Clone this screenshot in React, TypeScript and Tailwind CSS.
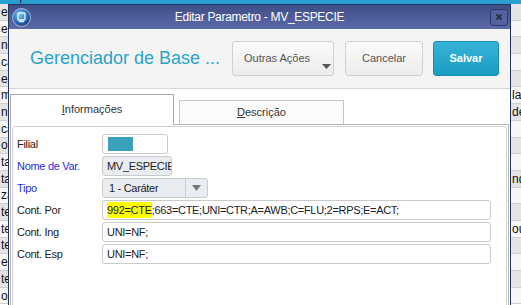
const leftCells = ['em', 'e a', 'ne', 'ca', 'em', 'm', 'na', 'ca', 'o e', 'ta', 'ta', 'za', 'te', 'te', 'te', 'e a', 'te', 'o'];
const rightCells: Record<number, string> = { 5: 'la.', 6: 'de', 10: 'nd', 13: 'ou' };

// ---------------------------------------------------------------------------
// Background grid (behind the dialog)
// ---------------------------------------------------------------------------

function BackgroundGrid() {
  return (
    <div className="flex flex-col">
      <div className="h-[4px] overflow-hidden bg-[#2a9fd2]">
        <div className="-mt-[12px] flex h-[16px] items-center text-[12px] leading-[16px] text-[#0d1b33]">
          <span className="w-[272px] shrink-0 whitespace-nowrap">m tipos de documentos fiscais utilizados na</span>
          <span className="whitespace-nowrap">emissão de notas fiscais</span>
        </div>
      </div>
      {leftCells.map((cell, i) => (
        <div
          key={i}
          className={`flex h-[16.7px] items-center border-b border-[#cfcfcf] text-[12px] text-[#111] ${
            i % 2 === 0 ? 'bg-[#e4e4e4]' : 'bg-[#f6f6f6]'
          }`}
        >
          <span className="w-[512px] shrink-0 whitespace-nowrap pl-[1px]">{cell}</span>
          <span className="whitespace-nowrap">{rightCells[i] ?? ''}</span>
        </div>
      ))}
    </div>
  );
}

// ---------------------------------------------------------------------------
// Form pieces
// ---------------------------------------------------------------------------

function FieldLabel({ text, blue = false }: { text: string; blue?: boolean }) {
  return (
    <span className={`w-[89px] shrink-0 pl-[4px] ${blue ? 'text-[#2a2ae6]' : 'text-[#222]'}`}>{text}</span>
  );
}

function TextField({ value, highlight }: { value: string; highlight?: string }) {
  return (
    <div className="flex h-[20px] w-[389px] items-center overflow-hidden whitespace-nowrap rounded-[3px] border border-[#cacaca] bg-white pl-[4px] text-[#222]">
      {highlight && <span className="bg-[#ffff00] leading-[16px]">{highlight}</span>}
      {value}
    </div>
  );
}

// ---------------------------------------------------------------------------
// Dialog
// ---------------------------------------------------------------------------

function Dialog() {
  return (
    <div className="absolute left-[8px] top-[4px] flex h-[320px] w-[503px] flex-col border border-[#27335f] bg-white">
      {/* Title bar */}
      <div className="flex h-[24px] shrink-0 items-center bg-gradient-to-b from-[#3f4d88] to-[#5c6aa8]">
        <div className="flex w-[24px] justify-start pl-[3px]">
          <svg width="19" height="19" viewBox="0 0 19 19">
            <defs>
              <radialGradient id="ic" cx="40%" cy="35%" r="65%">
                <stop offset="0%" stopColor="#7fc4f0" />
                <stop offset="60%" stopColor="#2f78c4" />
                <stop offset="100%" stopColor="#1b3f7c" />
              </radialGradient>
            </defs>
            <circle cx="9.5" cy="9.5" r="9" fill="url(#ic)" stroke="#c9d3ec" strokeWidth="0.8" />
            <rect x="6" y="5" width="7" height="7" rx="1" fill="none" stroke="#eaf4ff" strokeWidth="1.3" />
            <path d="M7 13.5h5" stroke="#eaf4ff" strokeWidth="1.3" />
          </svg>
        </div>
        <div className="flex-1 text-center text-[12px] tracking-[-0.3px] text-white">Editar Parametro - MV_ESPECIE</div>
        <div className="flex w-[24px] justify-end pr-[2px]">
          <div className="flex h-[17px] w-[18px] items-center justify-center rounded-[3px] border border-[#2c3865] bg-[#5562a0]">
            <svg width="8" height="8" viewBox="0 0 8 8">
              <path d="M1.5 1.5l5 5M6.5 1.5l-5 5" stroke="#2a2f40" strokeWidth="1.8" />
            </svg>
          </div>
        </div>
      </div>

      {/* Header */}
      <div className="flex h-[60px] shrink-0 items-center border-b border-[#d6d6d6] bg-[#f4f4f4] pl-[21px] pr-[11px]">
        <span className="flex-1 text-[18px] text-[#2ba4cc]">Gerenciador de Base ...</span>
        <button className="relative flex h-[35px] w-[102px] items-center rounded-[3px] border border-[#d0d0d0] bg-gradient-to-b from-[#fbfbfb] to-[#ececec] pl-[11px] text-[11px] text-[#555]">
          Outras Ações
          <svg className="absolute bottom-[6px] right-[2px]" width="9" height="5" viewBox="0 0 9 5">
            <path d="M0 0h9L4.5 5z" fill="#555" />
          </svg>
        </button>
        <button className="ml-[11px] flex h-[35px] w-[78px] items-center justify-center rounded-[3px] border border-[#d0d0d0] bg-gradient-to-b from-[#fbfbfb] to-[#ececec] text-[11px] text-[#555]">
          Cancelar
        </button>
        <button className="ml-[10px] flex h-[35px] w-[66px] items-center justify-center rounded-[3px] border border-[#1a8fb2] bg-gradient-to-b from-[#36b4d8] to-[#1a9bc1] text-[11px] font-bold text-white">
          Salvar
        </button>
      </div>

      {/* Tabs */}
      <div className="flex flex-1 flex-col px-[1px] pt-[5px] text-[11px]">
        <div className="relative z-10 flex items-end gap-[5px]">
          <div className="-mb-px flex h-[31px] w-[164px] items-center justify-center border border-b-0 border-[#a9a9a9] bg-white pb-[1px] text-[#333]">
            <span>
              <span className="underline">I</span>nformações
            </span>
          </div>
          <div className="flex h-[24px] w-[165px] items-center justify-center border border-b-0 border-[#c6c6c6] bg-[#fbfbfb] text-[#333]">
            <span>
              <span className="underline">D</span>escrição
            </span>
          </div>
        </div>

        {/* Panel */}
        <div className="flex flex-1 flex-col border border-[#b6b6b6] p-[1px]">
          <div className="flex flex-1 flex-col gap-[2px] rounded-[3px] border border-[#d2d2d2] pt-[7px] tracking-[-0.3px]">
            <div className="flex h-[20px] items-center">
              <FieldLabel text="Filial" />
              <div className="flex h-[20px] w-[66px] items-center rounded-[3px] border border-[#cacaca] bg-white pl-[5px]">
                <div className="h-[14px] w-[25px] bg-[#3a9fb8]" />
              </div>
            </div>
            <div className="flex h-[20px] items-center">
              <FieldLabel text="Nome de Var." blue />
              <div className="flex h-[20px] w-[70px] items-center overflow-hidden whitespace-nowrap rounded-[3px] border border-[#cacaca] bg-[#e9ecf0] pl-[4px] text-[#222]">
                MV_ESPECIE
              </div>
            </div>
            <div className="flex h-[20px] items-center">
              <FieldLabel text="Tipo" blue />
              <div className="flex h-[20px] w-[106px] items-center rounded-[3px] border border-[#cacaca] bg-[#e9ecf0] text-[#222]">
                <span className="flex-1 pl-[6px]">1 - Caráter</span>
                <div className="flex h-full w-[22px] items-center justify-center border-l border-[#cacaca]">
                  <svg width="9" height="6" viewBox="0 0 9 6">
                    <path d="M0 0h9L4.5 6z" fill="#777" />
                  </svg>
                </div>
              </div>
            </div>
            <div className="flex h-[20px] items-center">
              <FieldLabel text="Cont. Por" />
              <TextField highlight="992=CTE" value=";663=CTE;UNI=CTR;A=AWB;C=FLU;2=RPS;E=ACT;" />
            </div>
            <div className="flex h-[20px] items-center">
              <FieldLabel text="Cont. Ing" />
              <TextField value="UNI=NF;" />
            </div>
            <div className="flex h-[20px] items-center">
              <FieldLabel text="Cont. Esp" />
              <TextField value="UNI=NF;" />
            </div>
          </div>
        </div>
      </div>
    </div>
  );
}

export default function App() {
  return (
    <div className="relative h-[305px] w-[521px] overflow-hidden bg-white font-['Liberation_Sans',Arial,sans-serif]">
      <BackgroundGrid />
      <Dialog />
    </div>
  );
}
